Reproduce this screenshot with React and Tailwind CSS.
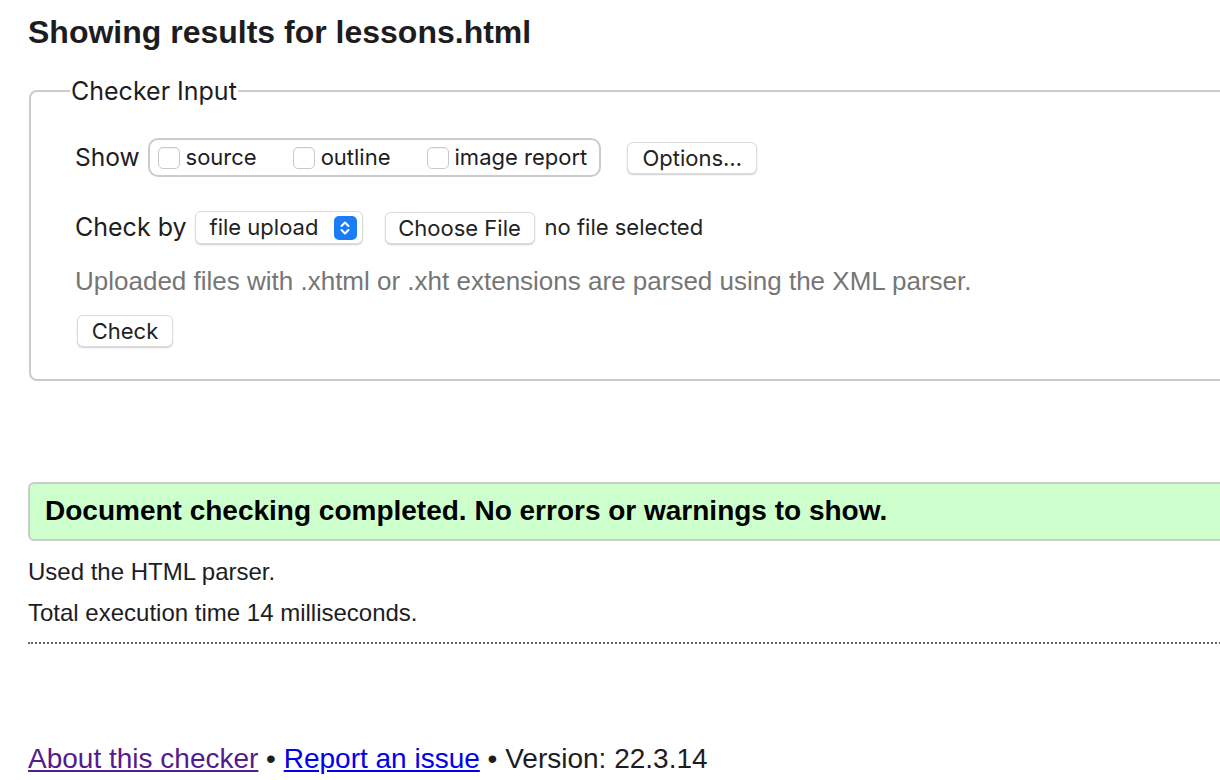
import React from "react";

const sans = { fontFamily: '"Liberation Sans", Arial, sans-serif' };
const ui = { fontFamily: '"Inter", "Liberation Sans", sans-serif' };

const Checkbox = ({ label }) => (
  <label className="flex items-center gap-[6px]">
    <span className="w-[22px] h-[22px] rounded-[5px] border border-[#c9c9c9] bg-white shadow-[inset_0_1px_1px_rgba(0,0,0,0.05)]"></span>
    <span>{label}</span>
  </label>
);

const Button = ({ children, className = "" }) => (
  <button
    type="button"
    className={
      "h-[32px] rounded-[6px] bg-white border border-[#dcdcdc] shadow-[0_1px_1.5px_rgba(0,0,0,0.2)] text-[22px] text-[#222] leading-none " +
      className
    }
  >
    {children}
  </button>
);

export default function App() {
  return (
    <div className="w-[1220px] h-[780px] overflow-hidden bg-white text-[#1d1d1f]" style={sans}>
      <div className="pl-[28px] w-[1260px]">
        <h1 className="pt-[14px] text-[32px] font-bold leading-[36px] text-[#1d1d1f]">
          Showing results for lessons.html
        </h1>

        <fieldset className="mt-[27px] ml-px border-2 border-[#cbcbcb] rounded-[8px] pl-[44px] pr-4 pt-[33px] pb-[32px]">
          <legend className="px-[1px] -ml-[5px] text-[25px] leading-[28px] text-[#1d1d1f]" style={ui}>
            Checker Input
          </legend>

          <div className="flex items-center" style={ui}>
            <span className="text-[24.5px] mr-[8px]">Show</span>
            <div className="h-[39px] flex items-center gap-[36px] pl-[8px] pr-[12px] border-2 border-[#cbcbcb] rounded-[10px] text-[22px]">
              <Checkbox label="source" />
              <Checkbox label="outline" />
              <Checkbox label="image report" />
            </div>
            <Button className="ml-[26px] w-[130px]">Options…</Button>
          </div>

          <div className="mt-[32px] flex items-center" style={ui}>
            <span className="text-[25px] mr-[8px]">Check by</span>
            <div className="h-[33px] w-[168px] flex items-center justify-between pl-[14px] pr-[5px] rounded-[6px] bg-white border border-[#dcdcdc] shadow-[0_1px_1.5px_rgba(0,0,0,0.2)] text-[22px] text-[#222]">
              <span>file upload</span>
              <span className="w-[23px] h-[24px] rounded-[5px] bg-[#1a7cf7] flex items-center justify-center">
                <svg width="12" height="16" viewBox="0 0 12 16" fill="none" stroke="white" strokeWidth="2" strokeLinecap="round" strokeLinejoin="round">
                  <path d="M2.5 6 L6 2.5 L9.5 6" />
                  <path d="M2.5 10 L6 13.5 L9.5 10" />
                </svg>
              </span>
            </div>
            <Button className="ml-[22px] w-[150px]">Choose File</Button>
            <span className="ml-[10px] text-[22px] text-[#222]">no file selected</span>
          </div>

          <p className="mt-[19px] text-[26px] leading-[30px] text-[#767676]">
            Uploaded files with .xhtml or .xht extensions are parsed using the XML parser.
          </p>

          <div className="mt-[19px]" style={ui}>
            <Button className="ml-[2px] w-[96px]">Check</Button>
          </div>
        </fieldset>

        <div className="mt-[101px] h-[59px] flex items-center pl-[15px] bg-[#ccffcc] border-2 border-[#cbcbcb] rounded-[6px]">
          <span className="text-[28px] font-bold text-black">
            Document checking completed. No errors or warnings to show.
          </span>
        </div>

        <p className="mt-[17px] text-[24px] leading-[28px] text-[#1d1d1f]">Used the HTML parser.</p>
        <p className="mt-[13px] text-[24px] leading-[28px] text-[#1d1d1f]">Total execution time 14 milliseconds.</p>

        <div className="mt-[15px] border-t-2 border-dotted border-[#666]"></div>

        <p className="mt-[99px] text-[28px] leading-[32px] text-[#1d1d1f]">
          <a href="#" className="text-[#551a8b] underline">About this checker</a>
          {" • "}
          <a href="#" className="text-[#0000ee] underline">Report an issue</a>
          {" • Version: 22.3.14"}
        </p>
      </div>
    </div>
  );
}
